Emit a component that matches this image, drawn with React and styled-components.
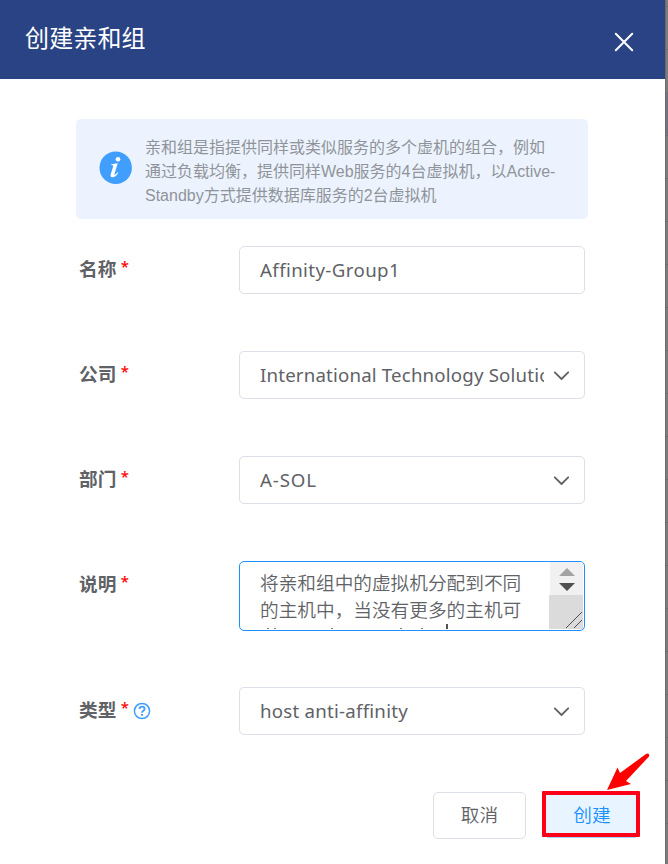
import React from "react";
import styled, { createGlobalStyle } from "styled-components";

const Global = createGlobalStyle`
  * { box-sizing: border-box; }
  body { margin: 0; overflow: hidden; background: #fff; }
  button, input { font: inherit; margin: 0; }
`;

const Page = styled.div`
  display: flex;
  width: 668px;
  height: 864px;
  overflow: hidden;
  font-family: "Noto Sans", "Noto Sans CJK SC", sans-serif;
  color: #606266;
`;

const Drawer = styled.section`
  width: 665px;
  height: 864px;
  display: flex;
  flex-direction: column;
  background: #fff;
`;

const Backdrop = styled.aside`
  flex: 1;
  background:
    linear-gradient(#73737f, #73737f) 0 92px / 100% 43px no-repeat,
    repeating-linear-gradient(#7b7c7b 0 6px, #6b6c6c 6px 7px, #7b7c7b 7px 43px);
  box-shadow: inset 1px 0 #6c6c6c;
`;

const Header = styled.header`
  height: 79px;
  padding: 0 30px 0 25px;
  display: flex;
  justify-content: space-between;
  background: #2a4385;
  color: #fff;
`;

const Title = styled.h1`
  margin: 19px 0 0;
  font: 400 24px/36px "Noto Sans CJK SC", sans-serif;
  letter-spacing: 0.15px;
`;

const CloseButton = styled.button`
  width: 22px;
  height: 22px;
  margin-top: 31px;
  padding: 0;
  border: 0;
  background: none;
  color: #fff;
  svg { display: block; }
`;

const Body = styled.main`
  padding: 40px 77px 0 76px;
`;

const Notice = styled.div`
  display: flex;
  height: 100px;
  padding: 32px 0 0 23px;
  gap: 13px;
  border-radius: 5px;
  background: #ecf3fe;
`;

const NoticeText = styled.p`
  margin: -15px 0 0;
  font: 400 16px/24px "Liberation Sans", "Noto Sans CJK SC", sans-serif;
  color: #909399;
  white-space: nowrap;
`;

const Form = styled.form`
  padding: 27px 0 0 3px;
`;

const Row = styled.div`
  display: flex;
  align-items: flex-start;
  height: ${(p) => p.$height || 105}px;
`;

const Label = styled.label`
  display: flex;
  align-items: center;
  width: 160px;
  height: 44px;
  font: 700 18.67px/44px "Noto Sans CJK SC", sans-serif;
`;

const Required = styled.span`
  margin-left: 4.5px;
  width: 8.5px;
  height: 44px;
  font: 500 15px/41px "Noto Sans", sans-serif;
  color: #f00;
`;

const HelpIcon = styled.svg`
  margin: 3px 0 0 4px;
`;

const Control = styled.div`
  display: flex;
  align-items: center;
  width: 346px;
  height: 48px;
  padding: 0 14px 0 20px;
  border: 1px solid #dcdfe6;
  border-radius: 5px;
`;

const Value = styled.span`
  width: 285px;
  overflow: hidden;
  white-space: nowrap;
  font-size: 18.67px;
  line-height: 44px;
  letter-spacing: ${(p) => p.$spacing || 0}px;
`;

const Chevron = styled.svg`
  margin: 1px 0 0 8px;
  flex: none;
`;

const TextArea = styled.div`
  display: flex;
  width: 346px;
  height: 70px;
  padding-left: 20px;
  border: 1px solid #1e90ff;
  border-radius: 5px;
  overflow: hidden;
`;

const AreaText = styled.div`
  width: 289px;
  height: 68px;
  padding-top: 6px;
  white-space: nowrap;
  font: 350 18.67px/27px "Noto Sans CJK SC", sans-serif;
`;

const NextLine = styled.svg`
  display: block;
  margin-top: 2px;
`;

const Scroll = styled.div`
  width: 34px;
  height: 67px;
`;

const Footer = styled.footer`
  display: flex;
  justify-content: flex-end;
  gap: 16px;
  padding-right: 25px;
`;

const CancelButton = styled.button`
  width: 93px;
  height: 47px;
  padding: 0 0 3px;
  border: 1px solid #dcdfe6;
  border-radius: 5px;
  background: #fff;
  color: #606266;
  font: 350 18.67px/42px "Noto Sans CJK SC", sans-serif;
`;

const CreateFrame = styled.div`
  position: relative;
  width: 98px;
  height: 46px;
  margin-top: -1px;
  border: 4px solid #ff0019;
  border-radius: 1px;
`;

const CreateButton = styled.button`
  width: 90px;
  height: 38px;
  padding: 0 0 0 2px;
  border: 0;
  background: #e8f4ff;
  color: #1890ff;
  font: 350 18.67px/38px "Noto Sans CJK SC", sans-serif;
`;

const ButtonEdge = styled.i`
  position: absolute;
  left: 1px;
  right: 0;
  top: 42px;
  height: 1px;
  border-radius: 0 0 5px 5px;
  background: #a3d3ff;
`;

const Pointer = styled.svg`
  position: absolute;
  left: 60px;
  top: -43px;
`;

const Field = ({ label, value, select, help, height, spacing }) => (
  <Row $height={height}>
    <Label>
      {label}
      <Required>*</Required>
      {help && (
        <HelpIcon width="18" height="18" viewBox="0 0 18 18" fill="none" stroke="#409eff">
          <circle cx="9" cy="9" r="7.6" strokeWidth="1.5" />
          <path d="M6.5 7.1C6.5 3.8 11.6 4 11.6 6.9C11.6 8.8 9 8.7 9 10.7" strokeWidth="1.8" />
          <path d="M9 12v1.8" strokeWidth="2" />
        </HelpIcon>
      )}
    </Label>
    <Control>
      <Value $spacing={spacing}>{value}</Value>
      {select && (
        <Chevron width="18" height="12" viewBox="0 0 18 12" fill="none">
          <path d="M2.8 2.3L9.5 9L16.2 2.3" stroke="#606266" strokeWidth="1.8" strokeLinecap="round" strokeLinejoin="round" />
        </Chevron>
      )}
    </Control>
  </Row>
);

export default function App() {
  return (
    <Page>
      <Global />
      <Drawer>
        <Header>
          <Title>创建亲和组</Title>
          <CloseButton aria-label="close">
            <svg width="22" height="22" viewBox="0 0 22 22">
              <path d="M2.8 2.8L19.2 19.2M19.2 2.8L2.8 19.2" stroke="#fff" strokeWidth="2" strokeLinecap="round" />
            </svg>
          </CloseButton>
        </Header>
        <Body>
          <Notice>
            <svg width="33" height="33" viewBox="0 0 33 33">
              <circle cx="16.7" cy="16.7" r="16.2" fill="#409eff" />
              <circle cx="19" cy="8.2" r="2.3" fill="#fff" />
              <path d="M12.3 13.2L18.7 12.2L15.5 23.3Q15.2 25 17.5 22.6L18.6 21.2L19.3 21.8Q16.5 26.5 13.2 26.3Q10.9 26 11.8 23L14.2 15.2Q14.5 13.9 12.2 14.1Z" fill="#fff" />
            </svg>
            <NoticeText>
              亲和组是指提供同样或类似服务的多个虚机的组合，例如
              <br />
              通过负载均衡，提供同样Web服务的4台虚拟机，以Active-
              <br />
              Standby方式提供数据库服务的2台虚拟机
            </NoticeText>
          </Notice>
          <Form>
            <Field label="名称" value="Affinity-Group1" spacing={0.4} />
            <Field label="公司" value="International Technology Solutions" select spacing={0.18} />
            <Field label="部门" value="A-SOL" select spacing={0.9} />
            <Row $height={126}>
              <Label>
                说明<Required>*</Required>
              </Label>
              <TextArea>
                <AreaText>
                  将亲和组中的虚拟机分配到不同
                  <br />
                  的主机中，当没有更多的主机可
                  <NextLine width="289" height="6" viewBox="0 0 289 6">
                    <path d="M7 4.5h2M14 4.5h2M71 4.5h2M140 4.5h2M161 4.5h2" stroke="#77797c" />
                    <path d="M187 0v5" stroke="#505256" strokeWidth="2" />
                  </NextLine>
                </AreaText>
                <Scroll>
                  <svg width="34" height="67" viewBox="0 0 34 67">
                    <path d="M1 0h33v33H1z" fill="#f1f1f1" />
                    <path d="M0 33h34v34H0z" fill="#dbdbdb" />
                    <path d="M10 14L18 6L26 14z" fill="#a3a3a3" />
                    <path d="M10 21H26L18 29z" fill="#505050" />
                    <path d="M17 66L33 50M25 66L33 58" stroke="#505050" />
                  </svg>
                </Scroll>
              </TextArea>
            </Row>
            <Field label="类型" value="host anti-affinity" select help spacing={0.24} />
          </Form>
        </Body>
        <Footer>
          <CancelButton>取消</CancelButton>
          <CreateFrame>
            <CreateButton>创建</CreateButton>
            <ButtonEdge />
            <Pointer width="50" height="42" viewBox="0 0 50 42">
              <path d="M1 38L11.5 15.5L14 21L40 2Q44 0.5 43 4.5L20 29L25 32Z" fill="#f00" />
            </Pointer>
          </CreateFrame>
        </Footer>
      </Drawer>
      <Backdrop />
    </Page>
  );
}
